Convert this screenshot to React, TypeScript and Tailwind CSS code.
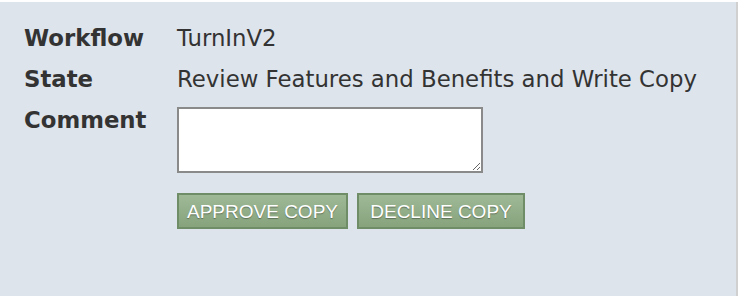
export default function App() {
  return (
    <div className="w-[738px] h-[296px] bg-[#d0d0d0]">
      <div
        className="w-[736px] h-[294px] mt-[2px] bg-[#dee4ec] pl-[24px] pt-[22px] text-[#333333]"
        style={{ fontFamily: '"DejaVu Sans", Verdana, sans-serif' }}
      >
        <div className="grid grid-cols-[153px_1fr] gap-y-[13px] text-[22.8px] leading-[28px]">
          <div className="font-bold">Workflow</div>
          <div>TurnInV2</div>
          <div className="font-bold">State</div>
          <div>Review Features and Benefits and Write Copy</div>
          <div className="font-bold">Comment</div>
          <div className="mt-[1px]">
            <textarea className="block w-[306px] h-[66px] bg-white border-2 border-[#8a8a8a] outline-none" />
            <div
              className="flex gap-[9px] mt-[20px]"
              style={{ fontFamily: '"Liberation Sans", Arial, sans-serif' }}
            >
              <button className="h-[36px] w-[171px] border-2 border-[#6f8d67] bg-gradient-to-b from-[#9fb996] to-[#86a37d] text-white text-[19px] leading-none [text-shadow:0_1px_1px_rgba(0,0,0,0.35)]">
                APPROVE COPY
              </button>
              <button className="h-[36px] w-[168px] border-2 border-[#6f8d67] bg-gradient-to-b from-[#9fb996] to-[#86a37d] text-white text-[19px] leading-none [text-shadow:0_1px_1px_rgba(0,0,0,0.35)]">
                DECLINE COPY
              </button>
            </div>
          </div>
        </div>
      </div>
    </div>
  );
}
